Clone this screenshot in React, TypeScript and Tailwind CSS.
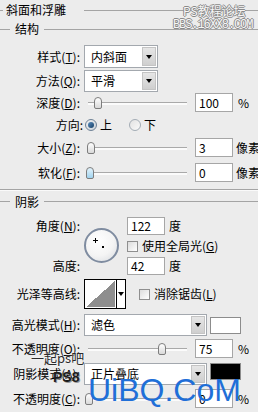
import React from "react";

type Kids = { children?: React.ReactNode };

function K({ children }: Kids) {
  return <span className="underline underline-offset-[1px]">{children}</span>;
}

function Row({ label, className, children }: Kids & { label: React.ReactNode; className: string }) {
  return (
    <div className={`flex items-center ${className}`}>
      <div className="w-[80px] shrink-0 text-right whitespace-nowrap">{label}</div>
      <div className="ml-[4px] flex h-full items-center">{children}</div>
    </div>
  );
}

function Arrow() {
  return <div className="h-0 w-0 border-t-[4px] border-r-[3px] border-l-[3px] border-t-black border-r-transparent border-l-transparent" />;
}

function Select({ value, wide }: { value: string; wide?: boolean }) {
  return (
    <div className={`flex h-full border border-[#a3a8ae] bg-white ${wide ? "w-[123px]" : "w-[74px]"}`}>
      <div className="flex flex-1 items-center pl-[6px]">{value}</div>
      <div className="m-[1px] flex w-[14px] items-center justify-center border border-[#c4c4c4] bg-gradient-to-b from-[#e6e6e6] to-[#cfcfcf]">
        <Arrow />
      </div>
    </div>
  );
}

function Slider({ pos, active }: { pos: number; active?: boolean }) {
  return (
    <div className="relative h-[14px] w-[103px]">
      <div className="absolute top-[6px] right-0 left-[4px] h-[3px] border-t border-[#a9a9a9] bg-[#fbfbfb]" />
      <div
        style={{ left: pos }}
        className={`absolute top-[1px] h-[12px] w-[8px] rounded-t-[4px] rounded-b-[2px] border border-[#7d7d7d] ${
          active ? "bg-gradient-to-b from-[#e4f4fc] to-[#9fd2ee]" : "bg-gradient-to-b from-[#ffffff] to-[#d9d9d9]"
        }`}
      />
    </div>
  );
}

function Num({ v }: { v: string }) {
  return <div className="flex h-full w-[38px] items-center border border-[#a6a6a6] bg-white pl-[3px]">{v}</div>;
}

function Check() {
  return <div className="h-[11px] w-[11px] shrink-0 border border-[#8f8f8f] bg-gradient-to-br from-[#dcdcdc] to-[#ffffff]" />;
}

function Legend({ text }: { text: string }) {
  return (
    <div className="flex h-full items-center">
      <div className="h-px w-[10px] bg-[#a4a4a4]" />
      <div className="px-[5px]">{text}</div>
      <div className="h-px flex-1 bg-[#a4a4a4]" />
    </div>
  );
}

export default function App() {
  return (
    <div className="relative h-[412px] w-[258px] overflow-hidden bg-[#ececec] font-['Noto_Sans_CJK_SC','Noto_Sans',sans-serif] text-[12px] leading-[14px] text-black">
      {/* 斜面和浮雕 */}
      <div className="flex h-[20px] items-center">
        <div className="h-px w-[3px] bg-[#a4a4a4]" />
        <div className="pl-[3px]">斜面和浮雕</div>
        <div className="ml-[18px] h-px flex-1 bg-[#a4a4a4]" />
      </div>

      <div className="h-[18px]">
        <Legend text="结构" />
      </div>

      <Row className="mt-[7px] h-[23px]" label={<>样式(<K>T</K>):</>}>
        <Select value="内斜面" />
      </Row>
      <Row className="mt-[2px] h-[22px]" label={<>方法(<K>Q</K>):</>}>
        <Select value="平滑" />
      </Row>
      <Row className="mt-[1px] h-[19px]" label={<>深度(<K>D</K>):</>}>
        <Slider pos={10} />
        <div className="ml-[8px] h-full">
          <Num v="100" />
        </div>
        <div className="ml-[5px]">%</div>
      </Row>

      <div className="mt-[4px] flex h-[18px] items-center">
        <div className="w-[83px] text-right">方向:</div>
        <div className="ml-[2px] flex h-[12px] w-[12px] items-center justify-center rounded-full border border-[#6f8296] bg-gradient-to-br from-[#f2f2f2] to-[#c9d1d8]">
          <div className="h-[6px] w-[6px] rounded-full bg-gradient-to-br from-[#5b8fbf] to-[#173f66]" />
        </div>
        <div className="ml-[3px]">上</div>
        <div className="ml-[17px] h-[12px] w-[12px] rounded-full border border-[#a3acb5] bg-gradient-to-br from-[#e2e2e2] to-[#fafafa]" />
        <div className="ml-[3px]">下</div>
      </div>

      <Row className="mt-[4px] h-[19px]" label={<>大小(<K>Z</K>):</>}>
        <Slider pos={3} />
        <div className="ml-[8px] h-full">
          <Num v="3" />
        </div>
        <div className="ml-[3px] whitespace-nowrap">像素</div>
      </Row>
      <Row className="mt-[6px] h-[19px]" label={<>软化(<K>F</K>):</>}>
        <Slider pos={2} active />
        <div className="ml-[8px] h-full">
          <Num v="0" />
        </div>
        <div className="ml-[3px] whitespace-nowrap">像素</div>
      </Row>

      <div className="mt-[7px] h-px bg-[#a4a4a4]" />
      <div className="h-px bg-[#fafafa]" />

      {/* 阴影 */}
      <div className="h-[21px]">
        <Legend text="阴影" />
      </div>

      <div className="mt-[5px] flex h-[58px]">
        <div className="flex w-[80px] flex-col justify-between text-right">
          <div className="flex h-[18px] items-center justify-end">
            角度(<K>N</K>):
          </div>
          <div className="flex h-[18px] items-center justify-end">高度:</div>
        </div>
        <div className="relative mt-[11px] ml-[4px] h-[35px] w-[35px] shrink-0 rounded-full border-2 border-[#7f8ca0] bg-[radial-gradient(circle_at_40%_35%,#ffffff_0%,#f4f4f4_55%,#d6d9de_100%)]">
          <div className="absolute top-[8px] left-[9px] h-[5px] w-px bg-black" />
          <div className="absolute top-[10px] left-[7px] h-px w-[5px] bg-black" />
          <div className="absolute top-[16px] left-[16px] h-[2px] w-[2px] bg-black" />
        </div>
        <div className="ml-[8px] flex flex-col">
          <div className="flex h-[18px] items-center">
            <div className="h-full">
              <Num v="122" />
            </div>
            <div className="ml-[4px]">度</div>
          </div>
          <div className="mt-[4px] flex h-[14px] items-center">
            <Check />
            <div className="ml-[4px] whitespace-nowrap">
              使用全局光(<K>G</K>)
            </div>
          </div>
          <div className="mt-[4px] flex h-[18px] items-center">
            <div className="h-full">
              <Num v="42" />
            </div>
            <div className="ml-[4px]">度</div>
          </div>
        </div>
      </div>

      <Row className="mt-[4px] h-[30px]" label="光泽等高线:">
        <div className="flex h-full w-[42px] border border-black bg-white">
          <div className="m-[1px] w-[29px] bg-[linear-gradient(to_top_left,#8e8e8e_50%,#ffffff_50%)]" />
          <div className="w-px bg-black" />
          <div className="flex flex-1 items-center justify-center">
            <Arrow />
          </div>
        </div>
        <div className="ml-[13px]">
          <Check />
        </div>
        <div className="ml-[4px] whitespace-nowrap">
          消除锯齿(<K>L</K>)
        </div>
      </Row>

      <Row className="mt-[5px] h-[22px]" label={<>高光模式(<K>H</K>):</>}>
        <Select value="滤色" wide />
        <div className="ml-[3px] h-[17px] w-[31px] border border-[#8c8c8c] bg-white" />
      </Row>
      <Row className="mt-[3px] h-[19px]" label={<>不透明度(<K>O</K>):</>}>
        <Slider pos={74} />
        <div className="ml-[8px] h-full">
          <Num v="75" />
        </div>
        <div className="ml-[5px]">%</div>
      </Row>
      <Row className="mt-[5px] h-[22px]" label={<>阴影模式(<K>A</K>):</>}>
        <Select value="正片叠底" wide />
        <div className="ml-[3px] h-[17px] w-[31px] self-start border border-[#8c8c8c] bg-black" />
      </Row>
      <Row className="mt-[4px] h-[19px]" label={<>不透明度(<K>C</K>):</>}>
        <Slider pos={1} />
        <div className="ml-[8px] h-full">
          <Num v="0" />
        </div>
        <div className="ml-[5px]">%</div>
      </Row>

      {/* watermarks */}
      <div className="absolute top-[5px] left-[183px] text-[12px] leading-[12px] text-[#f6f6f6] [text-shadow:1px_0_0_#8a8a8a,-1px_0_0_#8a8a8a,0_1px_0_#8a8a8a,0_-1px_0_#8a8a8a]">
        PS教程论坛
      </div>
      <div className="absolute top-[19px] left-[173px] font-['Liberation_Mono',monospace] text-[12px] leading-[12px] tracking-[-1.1px] text-[#f6f6f6] [text-shadow:1px_0_0_#8a8a8a,-1px_0_0_#8a8a8a,0_1px_0_#8a8a8a,0_-1px_0_#8a8a8a]">
        BBS.16XX8.COM
      </div>
      <div className="absolute top-[350px] left-[31px] text-[13px] leading-[15px] text-[#2b2b2b] [text-shadow:0_0_2px_#ffffff]">
        一起ps吧
      </div>
      <div className="absolute top-[369px] left-[53px] font-['Liberation_Sans',Arial,sans-serif] text-[14px] leading-[16px] font-bold text-[#1e1e1e] [text-shadow:1px_1px_0_#9a9a9a]">
        PS8
      </div>
      <div className="absolute top-[374px] left-[88px] font-['Liberation_Sans',Arial,sans-serif] text-[32px] leading-[32px] text-[#1f6fd8]">
        UiBQ.CoM
      </div>
    </div>
  );
}
